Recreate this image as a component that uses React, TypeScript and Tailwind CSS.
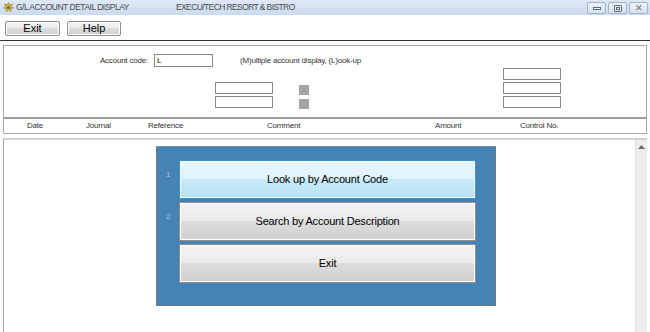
import React from 'react'

const winBtn =
  'w-[19px] h-[12px] border border-[#9fb2c9] rounded-[2px] bg-gradient-to-b from-[#eef3fa] to-[#d6e2f1] flex items-center justify-center'

const grayBtn =
  'border border-[#8e8e8e] shadow-[inset_0_0_0_1px_#ffffff] bg-[linear-gradient(to_bottom,#f2f2f2_0%,#ebebeb_50%,#dddddd_50%,#cfcfcf_100%)] text-black'

const field = 'w-[58px] h-[12px] border border-[#8a8a8a] bg-white'

const columns = [
  { label: 'Date', w: 'w-[82px] pl-[23px]' },
  { label: 'Journal', w: 'w-[62px]' },
  { label: 'Reference', w: 'w-[119px]' },
  { label: 'Comment', w: 'w-[168px]' },
  { label: 'Amount', w: 'w-[85px]' },
  { label: 'Control No.', w: 'w-[100px]' },
]

const menu = [
  { n: '1', label: 'Look up by Account Code', active: true },
  { n: '2', label: 'Search by Account Description', active: false },
  { n: '', label: 'Exit', active: false },
]

function AppIcon() {
  return (
    <svg width="11" height="11" viewBox="0 0 11 11">
      <path d="M5.5 0.5 L6.6 3 L9.5 2 L8 4.7 L10.5 6 L7.6 6.6 L8 9.8 L5.5 7.8 L3 9.8 L3.4 6.6 L0.5 6 L3 4.7 L1.5 2 L4.4 3 Z" fill="#e4b21c" stroke="#8a6a10" strokeWidth="0.5" />
      <circle cx="5.5" cy="5.5" r="1.6" fill="#3d6fb4" />
    </svg>
  )
}

export default function App() {
  return (
    <div className="w-[650px] h-[332px] bg-white overflow-hidden flex flex-col font-['Liberation_Sans',Arial,sans-serif]">
      {/* Title bar */}
      <div className="h-[15px] flex items-center bg-gradient-to-b from-[#dfe9f6] to-[#cbdaee]">
        <div className="ml-[3px] w-[11px] h-[11px]">
          <AppIcon />
        </div>
        <span className="ml-[2px] text-[8.5px] tracking-[-0.5px] text-[#4b4b4b] whitespace-nowrap">G/L ACCOUNT DETAIL DISPLAY</span>
        <span className="ml-[47px] text-[8.5px] tracking-[-0.6px] text-[#4b4b4b] whitespace-nowrap">EXECU/TECH RESORT &amp; BISTRO</span>
        <div className="ml-auto mr-[2px] flex gap-[2px] self-start mt-[2px]">
          <div className={winBtn}>
            <div className="w-[8px] h-[3px] border border-[#5a6a80] bg-white" />
          </div>
          <div className={winBtn}>
            <div className="w-[8px] h-[7px] border border-[#5a6a80] rounded-[1px] flex items-center justify-center">
              <div className="w-[4px] h-[3px] border border-[#5a6a80]" />
            </div>
          </div>
          <div className={winBtn + ' text-[9px] leading-none text-[#8a8a8a]'}>
            <span className="font-bold">✕</span>
          </div>
        </div>
      </div>

      {/* Toolbar */}
      <div className="h-[26px] flex items-start pt-[6px] pl-[5px] gap-[7px] border-b border-[#333333]">
        <button className={grayBtn + ' w-[55px] h-[15px] rounded-[2px] text-[11px] leading-none'}>Exit</button>
        <button className={grayBtn + ' w-[54px] h-[15px] rounded-[2px] text-[11px] leading-none'}>Help</button>
      </div>

      {/* Header panel */}
      <div className="mt-[4px] mx-[3px] border border-[#a8a8a8] text-[8px] tracking-[-0.2px] text-[#333333]">
        <div className="h-[71px] pt-[8px]">
          <div className="flex items-center h-[13px]">
            <span className="w-[144px] text-right">Account code:</span>
            <div className="ml-[6px] w-[59px] h-[13px] border border-[#8a8a8a] bg-white pl-[2px] leading-[11px] text-black">L</div>
            <span className="ml-[27px]">(M)ultiple account display, (L)ook-up</span>
          </div>
          <div className="flex mt-[1px]">
            <div className="ml-[211px] pt-[14px] flex flex-col gap-[2px]">
              <div className={field} />
              <div className={field} />
            </div>
            <div className="ml-[26px] pt-[17px] flex flex-col gap-[4px]">
              <div className="w-[10px] h-[10px] bg-[#a4a4a4]" />
              <div className="w-[10px] h-[10px] bg-[#a4a4a4]" />
            </div>
            <div className="ml-[194px] flex flex-col gap-[2px]">
              <div className={field} />
              <div className={field} />
              <div className={field} />
            </div>
          </div>
        </div>
        <div className="h-[16px] border-t-2 border-[#9c9c9c] flex items-center">
          {columns.map((c) => (
            <span key={c.label} className={c.w + ' shrink-0'}>
              {c.label}
            </span>
          ))}
        </div>
      </div>

      {/* Lower panel */}
      <div className="mt-[4px] mx-[3px] flex-1 flex border-t-2 border-l border-[#d2d2d2] border-l-[#a8a8a8]">
        <div className="flex-1 pl-[152px] pt-[6px]">
          <div className="w-[340px] h-[160px] bg-[#4682b4] border border-[#7a7a7a] border-t-[#6d93b8] pt-[13px] flex flex-col gap-[3px]">
            {menu.map((m) => (
              <div key={m.label} className="flex">
                <span className="w-[22px] pl-[9px] pt-[9px] text-[8px] text-[#a9c8e6]">{m.n}</span>
                <div
                  className={
                    'w-[297px] h-[39px] flex items-center justify-center text-[11px] tracking-[-0.2px] ' +
                    (m.active
                      ? 'border border-[#3c8fd0] shadow-[inset_0_0_0_1px_#f4fbff] bg-[linear-gradient(to_bottom,#eaf6fd_0%,#dff2fc_50%,#c9e9fa_50%,#b9e1f6_100%)] text-black'
                      : grayBtn)
                  }
                >
                  {m.label}
                </div>
              </div>
            ))}
          </div>
        </div>
        <div className="w-[12px] bg-[#ededed] border-l border-[#e2e2e2] flex justify-center pt-[5px]">
          <svg width="7" height="4" viewBox="0 0 7 4">
            <path d="M3.5 0 L7 4 L0 4 Z" fill="#6a6a6a" />
          </svg>
        </div>
      </div>
    </div>
  )
}
